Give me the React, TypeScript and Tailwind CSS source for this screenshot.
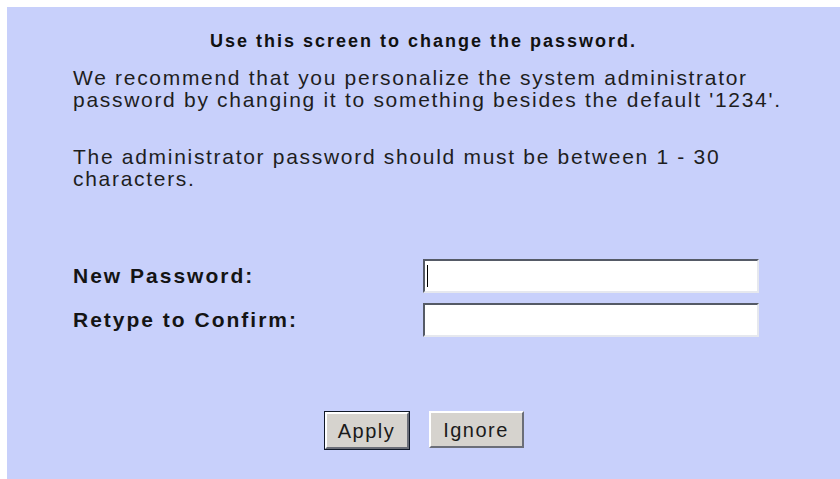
const bevelIn =
  'border-2 border-t-[#555a66] border-l-[#555a66] border-b-[#e6e8ee] border-r-[#e6e8ee]';

function Field({ label, caret }: { label: string; caret?: boolean }) {
  return (
    <div className="flex items-center">
      <span className="w-[350px] text-[21px] font-bold tracking-[2px] text-[#141414]">{label}</span>
      <div className={`relative h-[34px] w-[336px] bg-white ${bevelIn}`}>
        {caret && <span className="absolute left-[2px] top-[4px] h-[22px] w-[1px] bg-black" />}
      </div>
    </div>
  );
}

function WinButton({ label, focused }: { label: string; focused?: boolean }) {
  return (
    <button
      className={
        focused
          ? 'h-[39px] w-[86px] border border-[#101828] bg-[#d6d3ce] p-0'
          : 'h-[37px] w-[95px] bg-[#d6d3ce] p-0'
      }
    >
      <span className="flex h-full w-full items-center justify-center border-2 border-t-white border-l-white border-b-[#6b6e78] border-r-[#6b6e78] text-[20px] tracking-[1.5px] text-[#1a1a1a]">
        {label}
      </span>
    </button>
  );
}

export default function App() {
  return (
    <div
      className="h-[479px] w-[840px] bg-white pl-[7px] pt-[7px]"
      style={{ fontFamily: '"Liberation Sans", Arial, sans-serif' }}
    >
      <div className="flex h-full flex-col bg-[#c8d0fb]">
        <h1 className="mt-[23px] text-center text-[18px] font-bold leading-[22px] tracking-[2px] text-[#111]">
          Use this screen to change the password.
        </h1>
        <div className="pl-[66px] pr-[40px] text-[21px] leading-[22px] tracking-[1.7px] text-[#1e1e1e]">
          <p className="mt-[15px]">
            We recommend that you personalize the system administrator
            <br />
            password by changing it to something besides the default '1234'.
          </p>
          <p className="mt-[35px]">
            The administrator password should must be between 1 - 30
            <br />
            characters.
          </p>
        </div>
        <div className="mt-[69px] flex flex-col gap-[10px] pl-[66px]">
          <Field label="New Password:" caret />
          <Field label="Retype to Confirm:" />
        </div>
        <div className="mt-[74px] flex items-start justify-center gap-[19px]">
          <WinButton label="Apply" focused />
          <WinButton label="Ignore" />
        </div>
      </div>
    </div>
  );
}
